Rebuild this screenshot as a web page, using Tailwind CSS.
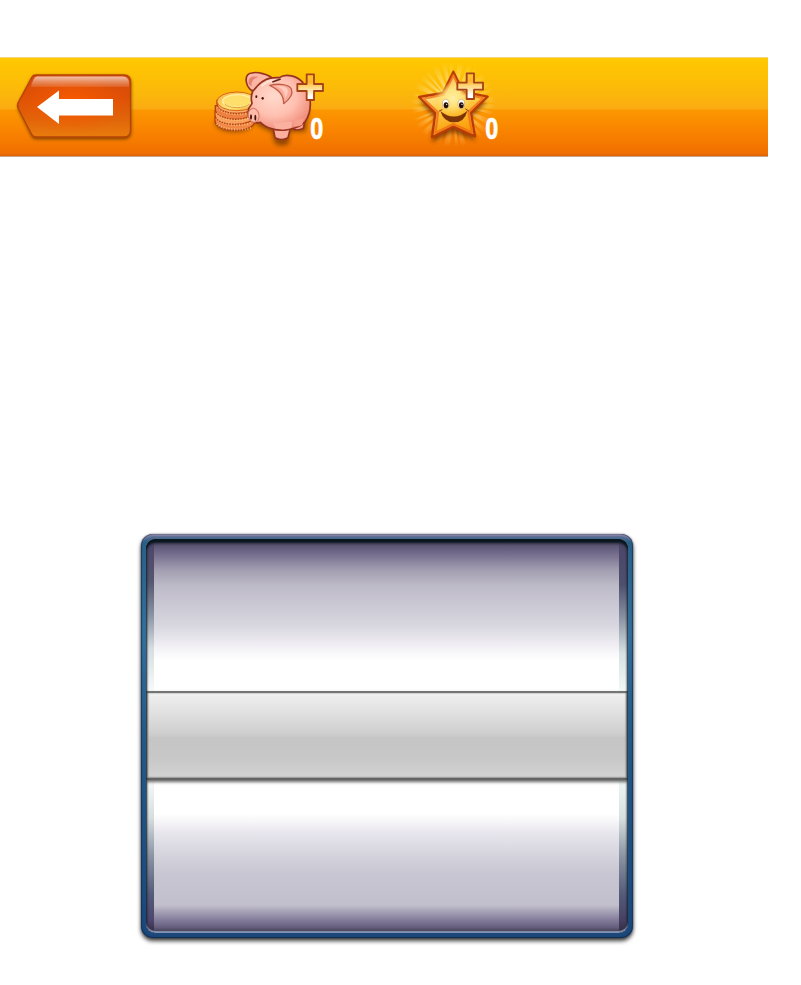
<!DOCTYPE html>
<html lang="en">
<head>
<meta charset="utf-8">
<title>Picker</title>
<script src="https://cdn.jsdelivr.net/npm/@tailwindcss/browser@4"></script>
</head>
<body class="bg-white w-[801px] h-[985px] overflow-hidden pt-[57px] font-['Open_Sans',sans-serif]">
<header class="w-[768px] h-[100px] flex border-t border-[#f3d77d] border-b border-b-[#c9a288] bg-[linear-gradient(180deg,#ffc900_0%,#fcb80a_35%,#faab12_52%,#fc9700_53%,#f98300_75%,#f07000_97%,#d96408_100%)]">
  <button class="w-[150px] h-[98px] shrink-0" aria-label="Back">
    <svg class="block" width="150" height="98" viewBox="0 58 150 98">
      <defs>
        <linearGradient id="btn" x1="0" y1="0" x2="0" y2="1"><stop offset="0" stop-color="#d64c0c"/><stop offset=".35" stop-color="#de4f06"/><stop offset=".7" stop-color="#e0640a"/><stop offset="1" stop-color="#e97c0c"/></linearGradient>
        <radialGradient id="heat" cx=".48" cy=".45" r=".5"><stop offset="0" stop-color="#fb5a00"/><stop offset="1" stop-color="#f05a00" stop-opacity="0"/></radialGradient>
        <linearGradient id="gloss" x1="0" y1="0" x2="0" y2="1"><stop offset="0" stop-color="#fff" stop-opacity=".65"/><stop offset=".5" stop-color="#fff" stop-opacity=".35"/><stop offset="1" stop-color="#fff" stop-opacity="0.1"/></linearGradient>
        <filter id="soft" x="-20%" y="-20%" width="140%" height="140%"><feGaussianBlur stdDeviation="1.500"/></filter>
      </defs>
      <path d="M36 75H124Q131 75 131 82V131Q131 138 124 138H36Q33 138 32 136L19 110Q17 106 19 102L32 77Q33 75 36 75Z" fill="#6a3800" stroke="#6a3800" opacity=".75" filter="url(#soft)" transform="translate(0 1)"/>
      <path d="M36 75H124Q130.500 75 130.500 82V130Q130.500 137 124 137H36Q33.500 137 32 135L18.500 109Q16.500 105.500 18.500 102L32 77Q33 75 36 75Z" fill="url(#btn)" stroke="#b84406" stroke-width="1.400"/>
      <path d="M36 75H124Q130 75 130 82V130Q130 137 124 137H36L18 106Z" fill="url(#heat)"/>
      <path d="M37 76.500H123Q129 77 129 83V87H31Q33 77 37 76.500Z" fill="url(#gloss)"/>
      <path d="M37 107L59 90.500V99H113V115.500H59V124Z" fill="#fff"/>
    </svg>
  </button>
  <div class="ml-[55px] w-[130px] h-[98px] shrink-0">
    <svg class="block" width="130" height="98" viewBox="0 -6 390 294">
      <defs>
        <radialGradient id="skin" cx=".42" cy=".38" r=".65"><stop offset="0" stop-color="#ffdacd"/><stop offset=".55" stop-color="#ffc0b0"/><stop offset="1" stop-color="#f08b78"/></radialGradient>
        <linearGradient id="plus" x1="0" y1="0" x2="0" y2="1"><stop offset="0" stop-color="#ffc72e"/><stop offset=".3" stop-color="#ffb62a"/><stop offset=".5" stop-color="#ffd880"/><stop offset=".68" stop-color="#ffe9b8"/><stop offset=".85" stop-color="#fff"/></linearGradient>
        <linearGradient id="coin" x1="0" x2="1" y1="0" y2="1"><stop offset="0" stop-color="#f9ae3c"/><stop offset=".6" stop-color="#ffe777"/><stop offset="1" stop-color="#f19a24"/></linearGradient>
        <filter id="blur6" x="-30%" y="-30%" width="160%" height="160%"><feGaussianBlur stdDeviation="6"/></filter>
      </defs>
      <g fill="#6d3500" opacity=".7" filter="url(#blur6)"><ellipse cx="88" cy="190" rx="58" ry="26"/><path d="M145 140L312 145L302 216L255 215L252 250Q230 265 209 250L200 215Q160 205 145 180Z"/></g>
      <g stroke="#b8400c" stroke-width="4">
        <path d="M30 170V184C35 220 145 220 150 184V170Z" fill="#f28744"/>
        <path d="M30 153V166C32 202 147 202 150 166V153Z" fill="#f9a15a"/>
        <path d="M31 137V150C38 187 147 187 152 150V137Z" fill="#ee8040"/>
        <path d="M36 121V132C40 170 150 170 155 132V121Z" fill="#faac66"/>
        <ellipse cx="96" cy="124" rx="60" ry="28" fill="url(#coin)" stroke="#d8651b" stroke-width="3"/>
        <ellipse cx="97" cy="123" rx="44" ry="19" fill="#ffdf6c" stroke="#fff0a8" stroke-width="4"/>
        <path d="M59 132C72 146 117 147 134 132" fill="none" stroke="#dfa038" stroke-width="3"/>
      </g>
      <g fill="none" stroke="#ffe0aa" stroke-width="7" stroke-dasharray="3 5" opacity=".6"><path d="M37 142C53 164 118 169 137 154"/><path d="M35 160C52 181 115 185 137 171"/><path d="M34 176C52 196 112 200 139 188"/><path d="M35 191C52 211 112 213 140 203"/></g>
      <g stroke="#96331f" stroke-width="5" stroke-linejoin="round">
        <path d="M262 183L259 205Q276 215 295 205L302 173Z" fill="#f9a08e"/>
        <path d="M203 196L210 233Q230 244 249 233L260 190Z" fill="#fbb09f"/>
        <path d="M145 90C152 65 181 51 223 53C240 40 280 45 297 73C318 97 325 151 300 185C285 203 262 206 247 209C212 215 180 202 166 187C148 193 126 177 130 151C132 139 138 139 141 130C137 115 138 103 145 90Z" fill="url(#skin)"/>
        <path d="M140 92C120 77 116 42 140 39C158 34 190 44 200 53C178 58 160 72 147 90Z" fill="#fcb6a5"/>
      </g>
      <path d="M204 190L211 205Q235 212 259 204L262 185Z" fill="#fbb19f"/>
      <path d="M266 180L266 198Q280 202 292 194L296 176Z" fill="#f7a08d"/>
      <path d="M194 76C221 70 252 72 259 87C266 105 247 123 236 131C236 107 225 91 194 76Z" fill="#fbab99" stroke="#c05d48" stroke-width="4" stroke-linejoin="round"/>
      <ellipse cx="146" cy="166" rx="16" ry="21" fill="#fdbcaa" stroke="#d67a62" stroke-width="3" transform="rotate(-10 146 166)"/>
      <path d="M131 72C128 53 139 47 160 50C146 56 137 65 140 80Z" fill="#e58571"/>
      <path d="M205 79C230 80 241 95 240 116C253 98 252 82 232 79Z" fill="#ffccbf"/>
      <path d="M171 77C185 65 198 62 209 61" fill="none" stroke="#ffe8df" stroke-width="6" stroke-linecap="round" opacity=".8"/>
      <path d="M202 66L227 57" stroke="#64221a" stroke-width="5"/>
      <g fill="#471510"><ellipse cx="154" cy="110" rx="3" ry="4"/><ellipse cx="173" cy="115" rx="3.500" ry="4"/><ellipse cx="138" cy="171" rx="3" ry="8"/><ellipse cx="151" cy="173" rx="3" ry="9"/></g>
      <path d="M305 43H327V72H354V93H327V120H305V93H277V72H305Z" fill="url(#plus)" stroke="#a74218" stroke-width="5.500" stroke-linejoin="round"/>
      <text x="0" y="0" transform="translate(315.500 238) scale(.8 1)" font-size="85" font-weight="700" fill="#fff" stroke="#fff" stroke-width="1.500">0</text>
    </svg>
  </div>
  <div class="ml-[70px] w-[110px] h-[98px] shrink-0">
    <svg class="block" width="110" height="98" viewBox="0 9 330 294">
      <defs>
        <linearGradient id="star" x1="0" y1="0" x2=".3" y2="1"><stop offset="0" stop-color="#ff9e20"/><stop offset=".4" stop-color="#ffe080"/><stop offset=".65" stop-color="#ffc53c"/><stop offset="1" stop-color="#fb9c08"/></linearGradient>
        <radialGradient id="face"><stop offset="0" stop-color="#fff0a5"/><stop offset=".5" stop-color="#ffe582" stop-opacity=".8"/><stop offset="1" stop-color="#ffdd60" stop-opacity="0"/></radialGradient>
        <radialGradient id="glow" gradientUnits="userSpaceOnUse" cx="145" cy="148" r="128"><stop offset=".4" stop-color="#fff4b1" stop-opacity=".6"/><stop offset=".7" stop-color="#ffeaa0" stop-opacity=".35"/><stop offset="1" stop-color="#ffe797" stop-opacity="0"/></radialGradient>
        <filter id="blur2" filterUnits="userSpaceOnUse" x="0" y="0" width="330" height="315"><feGaussianBlur stdDeviation="2"/></filter>
      </defs>
      <circle cx="145" cy="148" r="70" fill="none" stroke="url(#glow)" stroke-width="118" stroke-dasharray="8 5 5 9 10 7" filter="url(#blur2)"/>
      <path d="M145 60L176 117L244 132L195 180L210 248L145 222L80 252L90 180L44 130L113 120Z" fill="#7c3400" opacity=".85" filter="url(#blur6)" transform="translate(0 9)"/>
      <path d="M145 50L175 111L248 125L198 173L210 244L145 215L81 247L91 174L42 126L114 114Z" fill="url(#star)" stroke="#b93c06" stroke-width="7" stroke-linejoin="round"/>
      <path d="M145 61L171 115L235 129L190 171L201 233L145 207L91 234L99 172L55 131L118 119Z" fill="none" stroke="#ee6a14" stroke-width="7" stroke-linejoin="round" opacity=".75" filter="url(#blur2)"/>
      <ellipse cx="143" cy="130" rx="56" ry="50" fill="url(#face)"/>
      <g fill="#fff" stroke="#b98a48" stroke-width="1.500"><ellipse cx="122" cy="147" rx="10" ry="14"/><ellipse cx="169" cy="147" rx="10" ry="14"/></g>
      <g fill="#261006"><ellipse cx="123" cy="151" rx="7" ry="9"/><ellipse cx="169" cy="151" rx="7" ry="9"/></g>
      <circle cx="125" cy="148" r="2" fill="#fff"/><circle cx="171" cy="148" r="2" fill="#fff"/>
      <path d="M106 168Q147 202 187 167Q179 202 147 202Q116 202 106 168Z" fill="#7e3606"/>
      <path d="M103 168L111 164M182 162L191 168" stroke="#8e3f08" stroke-width="3" stroke-linecap="round"/>
      <path d="M185 55H207V83H234V104H207V132H185V104H157V83H185Z" fill="url(#plus)" stroke="#a74218" stroke-width="5.500" stroke-linejoin="round"/>
      <text x="0" y="0" transform="translate(240.500 253) scale(.8 1)" font-size="85" font-weight="700" fill="#fff" stroke="#fff" stroke-width="1.500">0</text>
    </svg>
  </div>
</header>
<main class="mt-[377px] ml-[141px] w-[492px] h-[404px] rounded-[12px] p-[5px] bg-[linear-gradient(180deg,#77769b_0,#286087_8px,#32709b_100px,#235a88_200px,#1b477a_100%)] shadow-[0_3px_4px_rgba(0,0,0,.75),0_0_2px_rgba(0,0,0,.5),inset_1px_0_1px_rgba(15,45,80,.7),inset_-1px_0_1px_rgba(15,45,80,.7),inset_0_2px_1px_#8583a5,inset_0_-1px_1px_#153055]">
  <div class="relative w-[482px] h-[394px] rounded-[9px] overflow-hidden flex flex-col bg-white">
    <div class="h-[152px] flex shrink-0 bg-[linear-gradient(180deg,#3e3952_0,#5d5675_7px,#78708f_16px,#a29eb1_31px,#bebbc8_47px,#cbc9d4_67px,#d8d6df_87px,#efedf2_105px,#fff_121px)]">
      <div class="w-[8px] bg-[linear-gradient(180deg,#4a4467,#55566f_28%,#8993a2_50%,#d5dddf_72%,#f7faf9)]"></div>
      <div class="flex-1"></div>
      <div class="w-[9px] bg-[linear-gradient(180deg,#4a4467,#4e506e_30%,#8993a2_52%,#d5e2e3_75%,#f2f9f7)]"></div>
    </div>
    <div class="relative h-[89px] shrink-0 border-t-2 border-[#747474] border-b-2 border-b-[#646464] bg-[linear-gradient(180deg,#fff_0,#ededed_3px,#dfdfdf_22px,#cecece_41px,#c5c5c5_45px,#c7c7c7_64px,#d3d3d3_100%)] shadow-[0_2px_3px_#666,inset_2px_0_2px_#aaa,inset_-2px_0_2px_#999,inset_0_-1px_1px_#999]"></div>
    <div class="h-[153px] flex shrink-0 bg-[linear-gradient(180deg,#fff_0,#fff_34px,#e8e6ed_53px,#d7d5de_72px,#c8c6d2_94px,#c2bfcc_125px,#8f89a5_137px,#68607f_147px,#403b50_152px)]">
      <div class="w-[8px] bg-[linear-gradient(180deg,#f7faf9,#d5dddd_25%,#8993a2_50%,#535b78_75%,#4e446d_92%,#30293f)]"></div>
      <div class="flex-1"></div>
      <div class="w-[9px] bg-[linear-gradient(180deg,#edf7f4,#d5dfdf_25%,#8993a2_50%,#535b78_75%,#473f60_92%,#30293f)]"></div>
    </div>
    <div class="absolute inset-0 rounded-[9px] shadow-[inset_0_4px_3px_#0b171e,inset_0_3px_1px_#10222c,inset_0_-2px_1px_#8393b1,inset_0_0_2px_1px_rgba(30,40,60,.8)]"></div>
  </div>
</main>
</body>
</html>
